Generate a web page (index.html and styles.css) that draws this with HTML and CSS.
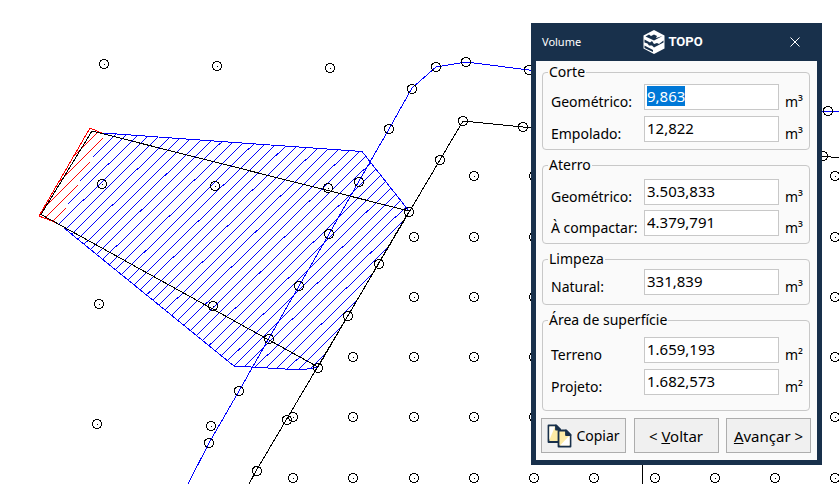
FILE: index.html
```html
<!DOCTYPE html>
<html lang="pt-BR">
<head>
<meta charset="utf-8">
<title>Volume</title>
<link rel="stylesheet" href="styles.css">
</head>
<body>
<main class="workspace">
<svg class="drawing" aria-hidden="true">
  <defs>
    <linearGradient id="fill-hatch" gradientUnits="userSpaceOnUse" spreadMethod="repeat" x1="-.3" y1="260" x2="5.32" y2="265.675">
      <stop offset="0" stop-color="#00f"/><stop offset=".09" stop-color="#00f"/>
      <stop offset=".09" stop-color="#fff"/><stop offset="1" stop-color="#fff"/>
    </linearGradient>
    <linearGradient id="cut-hatch" gradientUnits="userSpaceOnUse" spreadMethod="repeat" x1="-9.3" y1="260" x2="-3.68" y2="265.675">
      <stop offset="0" stop-color="#f00"/><stop offset=".09" stop-color="#f00"/>
      <stop offset=".09" stop-color="#fff"/><stop offset="1" stop-color="#fff"/>
    </linearGradient>
    <circle id="node" r="4.7"/>
    <g id="point"><circle r="4.5"/><path d="M-.5 0h1"/></g>
  </defs>
  <path fill="url(#fill-hatch)" d="M105 133L200 140 362 151.500 409 211 318 367 302 370 234 366 64 228 57 225Z"/>
  <path fill="url(#cut-hatch)" d="M90 128L105 134 57 225 39 216Z"/>
  <g class="blue">
    <path d="M103 133L200 140 362 151.500 409 211M64 228L234 366 302 370 318 367"/>
    <path d="M188 484L209 443 239 391 268.500 339 299 286 329 234 358.500 182 389 129 412 88 436 67 466 62 529 70 540 71M822 111H839"/>
  </g>
  <g class="red">
    <path d="M104 134L90 128 39 216 57 223"/>
  </g>
  <g class="black">
    <path d="M409 211L92 131 41 214.500 318 367 408 213"/>
    <path d="M249 484L256 471 463 121 523 127 540 128M822 156L839 158M642.500 460V484"/>
    <use href="#node" x="209" y="443"/><use href="#node" x="239" y="391"/><use href="#node" x="269" y="339"/><use href="#node" x="299" y="286"/><use href="#node" x="329" y="234"/><use href="#node" x="359" y="182"/><use href="#node" x="389" y="129"/><use href="#node" x="412" y="89"/><use href="#node" x="436" y="67"/><use href="#node" x="466" y="62"/><use href="#node" x="529" y="70"/><use href="#node" x="828" y="111"/>
    <use href="#node" x="257" y="471"/><use href="#node" x="287" y="420"/><use href="#node" x="318" y="368"/><use href="#node" x="348" y="316"/><use href="#node" x="379" y="264"/><use href="#node" x="409" y="212"/><use href="#node" x="440" y="160"/><use href="#node" x="463" y="121"/><use href="#node" x="523" y="127"/><use href="#node" x="823" y="156"/>
    <use href="#point" x="104" y="64"/><use href="#point" x="217" y="66"/><use href="#point" x="330" y="68"/><use href="#point" x="102" y="184"/><use href="#point" x="215" y="186"/><use href="#point" x="328" y="188"/><use href="#point" x="99" y="304"/><use href="#point" x="213" y="306"/><use href="#point" x="97" y="424"/><use href="#point" x="211" y="426"/>
    <use href="#point" x="474" y="176"/><use href="#point" x="534" y="176"/><use href="#point" x="835" y="176"/>
    <use href="#point" x="414" y="237"/><use href="#point" x="474" y="237"/><use href="#point" x="534" y="237"/><use href="#point" x="835" y="237"/>
    <use href="#point" x="414" y="297"/><use href="#point" x="474" y="297"/><use href="#point" x="534" y="297"/><use href="#point" x="835" y="297"/>
    <use href="#point" x="353" y="357"/><use href="#point" x="414" y="357"/><use href="#point" x="474" y="357"/><use href="#point" x="534" y="357"/><use href="#point" x="835" y="357"/>
    <use href="#point" x="293" y="417"/><use href="#point" x="353" y="417"/><use href="#point" x="414" y="417"/><use href="#point" x="474" y="417"/><use href="#point" x="534" y="417"/><use href="#point" x="835" y="417"/>
    <use href="#point" x="293" y="478"/><use href="#point" x="353" y="478"/><use href="#point" x="414" y="478"/><use href="#point" x="474" y="478"/><use href="#point" x="534" y="478"/><use href="#point" x="594" y="478"/><use href="#point" x="655" y="478"/><use href="#point" x="715" y="478"/><use href="#point" x="775" y="478"/><use href="#point" x="835" y="478"/>
  </g>
</svg>

<section class="dialog" role="dialog" aria-labelledby="dialog-title">
  <header class="titlebar">
    <h1 class="title" id="dialog-title">Volume</h1>
    <div class="brand">
      <svg class="brand-mark" viewBox="0 0 22 24" aria-hidden="true">
        <path fill="#fff" d="M11 0L21.500 5.500V18.500L11 24 .5 18.500V5.500Z"/>
        <g fill="#18304b">
          <path d="M2.500 6.500L6 4.500 8 6 11 4.500 14 6 13 8 19.500 6 11 10.500Z"/>
          <path d="M1.500 9.500L7 12.500 9 11 11 14 14 13 16 14 20.500 10.500V12.500L11 17.500 9 15.500 6 15.500 4.500 13.500 1.500 12.500Z"/>
          <path d="M1.500 15.500L10 20V22L1.500 18Z"/>
        </g>
      </svg>
      <span>TOPO</span>
    </div>
    <button class="close" type="button" aria-label="Fechar"><svg viewBox="0 0 10 10" aria-hidden="true"><path d="M.5.5l9 9M9.500.5l-9 9"/></svg></button>
  </header>
  <form class="body">
    <fieldset class="group">
      <legend>Corte</legend>
      <div class="rows">
        <div class="row"><label for="cut-geo">Geométrico:</label><input id="cut-geo" type="text" value="9,863"><span>m³</span></div>
        <div class="row"><label for="cut-swell">Empolado:</label><input id="cut-swell" type="text" value="12,822"><span>m³</span></div>
      </div>
    </fieldset>
    <fieldset class="group group-fill">
      <legend>Aterro</legend>
      <div class="rows">
        <div class="row"><label for="fill-geo">Geométrico:</label><input id="fill-geo" type="text" value="3.503,833"><span>m³</span></div>
        <div class="row"><label for="fill-compact">À compactar:</label><input id="fill-compact" type="text" value="4.379,791"><span>m³</span></div>
      </div>
    </fieldset>
    <fieldset class="group group-clean">
      <legend>Limpeza</legend>
      <div class="rows">
        <div class="row"><label for="natural">Natural:</label><input id="natural" type="text" value="331,839"><span>m³</span></div>
      </div>
    </fieldset>
    <fieldset class="group group-area">
      <legend>Área de superfície</legend>
      <div class="rows">
        <div class="row"><label for="terrain">Terreno</label><input id="terrain" type="text" value="1.659,193"><span>m²</span></div>
        <div class="row"><label for="project">Projeto:</label><input id="project" type="text" value="1.682,573"><span>m²</span></div>
      </div>
    </fieldset>
    <div class="actions">
      <button class="action copy" type="button">
        <svg viewBox="0 0 25 24" aria-hidden="true">
          <g stroke="#18304b" stroke-width="1.800" stroke-linejoin="round">
            <path fill="#fdeba6" d="M1.500 1.500H9L13 5.500V18H1.500Z"/>
            <path fill="#fff" stroke="none" d="M2.400 2.400H8L2.400 16Z"/>
            <path fill="#18304b" d="M9 1.500V5.500H13Z"/>
            <path fill="#fdeba6" d="M11.500 6.500H19L23.500 11V22.500H11.500Z"/>
            <path fill="#fff" stroke="none" d="M22.600 11.500V21.600H13Z"/>
            <path fill="#18304b" d="M19 6.500V11H23.500Z"/>
          </g>
        </svg>
        <span>Copiar</span>
      </button>
      <button class="action" type="button"><span>&lt; <u>V</u>oltar</span></button>
      <button class="action" type="button"><span><u>A</u>vançar &gt;</span></button>
    </div>
  </form>
</section>
</main>
<script src="main.js"></script>
</body>
</html>
```

FILE: styles.css
```css
* { box-sizing: border-box; }

body {
  margin: 0;
  background: #fff;
  color: #000;
  font: 14px/18px "Noto Sans", "Open Sans", sans-serif;
}

.workspace {
  position: relative;
  min-height: 100vh;
  overflow: hidden;
}

.drawing {
  position: absolute;
  inset: 0;
  width: 100%;
  height: 100%;
  fill: none;
  shape-rendering: crispEdges;
}

.blue { stroke: #00f; }
.red { stroke: #f00; }
.black { stroke: #000; }

.dialog {
  position: absolute;
  top: 23px;
  left: 531px;
  width: 291px;
  padding: 0 5px 5px;
  background: #18304b;
}

.titlebar {
  display: grid;
  grid-template-columns: 1fr auto 1fr;
  align-items: center;
  height: 38px;
  padding: 0 17px 0 6px;
  color: #fff;
}

.title {
  margin: 0;
  font-size: 11px;
  font-weight: 400;
}

.brand {
  display: flex;
  align-items: center;
  gap: 3px;
  padding-left: 4px;
  font: 700 13px/18px Roboto, sans-serif;
}

.brand-mark { width: 22px; height: 24px; }

.close {
  justify-self: end;
  display: flex;
  padding: 0;
  border: 0;
  background: none;
}

.close svg {
  width: 10px;
  height: 10px;
  stroke: #fff;
}

.body {
  display: flex;
  flex-direction: column;
  gap: 6px;
  padding: 2px 6px 7px 5px;
  background: #fafafa;
}

.group {
  min-width: 0;
  margin: 0 1px;
  padding: 3px 5px 7px;
  border: 1px solid #c8c8c8;
  border-radius: 4px;
}

.group-fill { padding-top: 5px; }
.group-clean { padding: 1px 5px 9px; }
.group-area { padding: 8px 5px 15px; }

legend { padding: 0 1px; }

.rows {
  display: flex;
  flex-direction: column;
  gap: 6px;
  padding-left: 3px;
}

.group-fill .rows { gap: 5px; }

.row {
  display: grid;
  grid-template-columns: 93px 1fr 25px;
  align-items: end;
  line-height: 16px;
}

.row span {
  padding-left: 6px;
  white-space: nowrap;
}

.row input {
  width: 100%;
  height: 26px;
  padding: 2px 2px 4px;
  border: 1px solid #c8c8c8;
  background: #fff;
  color: #000;
  font: inherit;
  font-size: 15px;
  line-height: 18px;
  outline: none;
}

.row input::selection { background: #0078d7; color: #fff; }

.actions {
  display: flex;
  justify-content: space-between;
  padding-top: 1px;
}

.action {
  display: flex;
  align-items: center;
  justify-content: center;
  gap: 4px;
  width: 85px;
  height: 35px;
  padding: 0;
  border: 1px solid #adadad;
  background: #f0f0f0;
  color: #000;
  font: inherit;
  font-size: 15px;
  white-space: nowrap;
}

.copy { font-size: 14px; }

.copy svg { width: 25px; height: 24px; }
```

FILE: main.js
```js
// Open with the first value selected, ready to copy.
const first = document.getElementById("cut-geo");
first.focus();
first.select();
```
